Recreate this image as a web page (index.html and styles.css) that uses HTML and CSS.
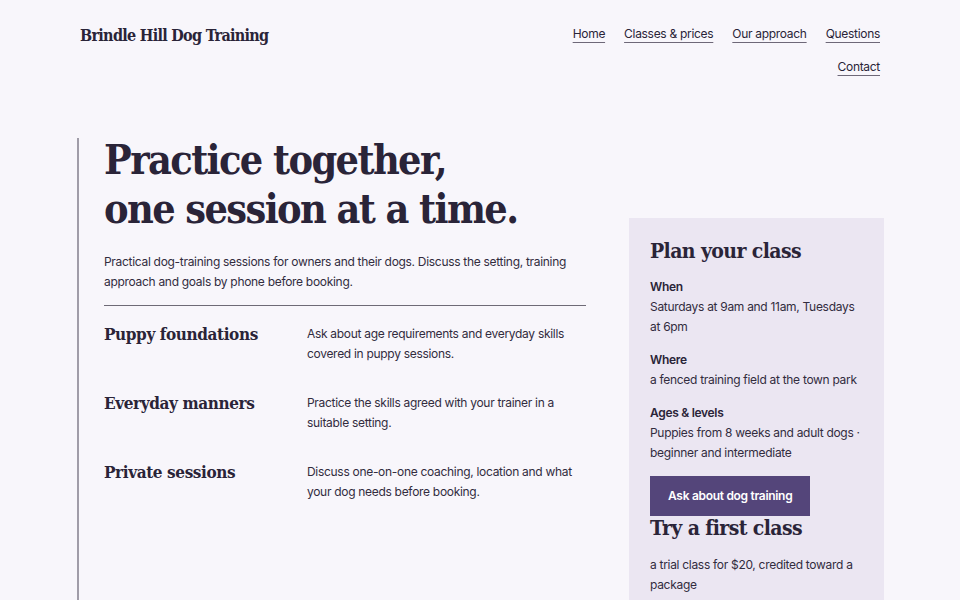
FILE: index.html
```html
<!DOCTYPE html>
<html lang="en">
<head>
    <meta charset="UTF-8">
    <meta name="viewport" content="width=device-width, initial-scale=1.0">
    <title>Brindle Hill Dog Training</title>
    <link rel="stylesheet" href="styles.css">
</head>
<body>
    <header class="site-header">
        <a class="brand" href="#">Brindle Hill Dog Training</a>
        <nav class="site-nav">
            <a href="#">Home</a>
            <a href="#">Classes &amp; prices</a>
            <a href="#">Our approach</a>
            <a href="#">Questions</a>
            <a href="#">Contact</a>
        </nav>
    </header>

    <main class="layout">
        <section class="intro">
            <h1>Practice together,<br>one session at a time.</h1>
            <p class="lede">Practical dog-training sessions for owners and their dogs. Discuss the setting, training approach and goals by phone before booking.</p>

            <div class="offerings">
                <div class="offering">
                    <h3>Puppy foundations</h3>
                    <p>Ask about age requirements and everyday skills covered in puppy sessions.</p>
                </div>
                <div class="offering">
                    <h3>Everyday manners</h3>
                    <p>Practice the skills agreed with your trainer in a suitable setting.</p>
                </div>
                <div class="offering">
                    <h3>Private sessions</h3>
                    <p>Discuss one-on-one coaching, location and what your dog needs before booking.</p>
                </div>
            </div>
        </section>

        <aside class="planner">
            <h2>Plan your class</h2>
            <dl>
                <dt>When</dt>
                <dd>Saturdays at 9am and 11am, Tuesdays at 6pm</dd>
                <dt>Where</dt>
                <dd>a fenced training field at the town park</dd>
                <dt>Ages &amp; levels</dt>
                <dd>Puppies from 8 weeks and adult dogs · beginner and intermediate</dd>
            </dl>
            <a class="cta" href="#">Ask about dog training</a>
            <h2>Try a first class</h2>
            <p>a trial class for $20, credited toward a package</p>
        </aside>
    </main>
</body>
</html>
```

FILE: styles.css
```css
body {
    font-family: Inter, "Noto Sans", sans-serif;
    margin: 0;
    padding: 0;
    background-color: #f8f6fb;
    color: #322c3e;
    font-size: 12px;
    letter-spacing: -0.3px;
    line-height: 20px;
}
h1, h2, h3, .brand {
    font-family: "DejaVu Serif Condensed", "DejaVu Serif", serif;
    font-weight: bold;
    color: #2a2438;
}
.site-header {
    width: 800px;
    margin: 0 auto;
    padding-top: 22px;
    display: flex;
    justify-content: space-between;
    align-items: flex-start;
}
.brand {
    font-size: 16px;
    text-decoration: none;
    letter-spacing: -0.7px;
    line-height: 28px;
}
.site-nav {
    max-width: 320px;
    margin-top: 2px;
    display: flex;
    flex-wrap: wrap;
    justify-content: flex-end;
    column-gap: 19px;
    row-gap: 13px;
}
.site-nav a {
    color: #2a2438;
    line-height: 20px;
    text-decoration: underline;
    text-decoration-color: #6e6878;
    text-underline-offset: 4px;
}
.layout {
    width: 807px;
    margin: 61px 0 0 77px;
    display: grid;
    grid-template-columns: 509px 255px;
    column-gap: 43px;
    align-items: start;
}
/* left column: hero, intro text and the three session types */
.intro {
    border-left: 2px solid #a09ca8;
    padding-left: 25px;
    min-height: 470px;
}
.intro h1 {
    margin: -2px 0 0;
    font-size: 41px;
    line-height: 49px;
    letter-spacing: -1.6px;
}
.lede {
    margin: 18px 0 0;
    padding-bottom: 13px;
    border-bottom: 1px solid #6e6a76;
}
.offering {
    display: grid;
    grid-template-columns: 203px 1fr;
    margin-top: 14px;
    min-height: 55px;
}
.offering h3 {
    margin: 0;
    font-size: 17px;
    line-height: 28px;
    letter-spacing: -0.4px;
}
.offering p {
    margin: 0;
    padding-top: 4px;
}
/* right column: booking details */
.planner {
    margin-top: 80px;
    background-color: #ebe6f2;
    padding: 21px 21px 16px;
    min-height: 360px;
}
.planner h2 {
    margin: 0;
    font-size: 21px;
    line-height: 24px;
    letter-spacing: -0.6px;
}
.planner dl {
    margin: 14px 0 0;
}
.planner dt {
    font-weight: 600;
    color: #2a2438;
}
.planner dd {
    margin: 0 0 13px;
}
.cta {
    display: block;
    width: fit-content;
    margin-top: 1px;
    padding: 10px 18px;
    background-color: #54457a;
    color: #fff;
    font-weight: 600;
    text-decoration: none;
    line-height: 20px;
}
.planner p {
    margin: 15px 0 0;
}
```
